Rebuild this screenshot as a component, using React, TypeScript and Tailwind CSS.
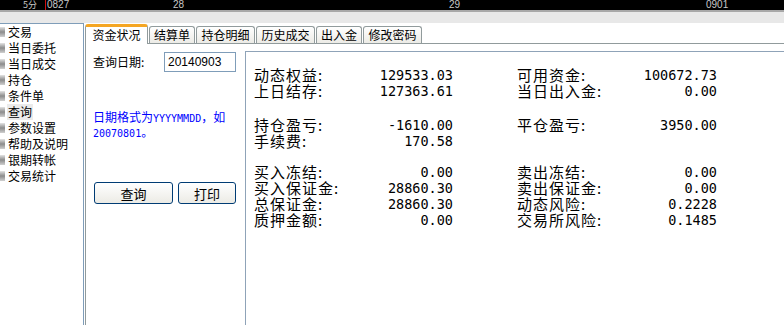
import React from 'react';

const cjk = "font-['Noto_Sans_CJK_SC',sans-serif]";
const mono = "font-['DejaVu_Sans_Mono','Noto_Sans_CJK_SC',monospace]";

const menu = ['交易', '当日委托', '当日成交', '持仓', '条件单', '查询', '参数设置', '帮助及说明', '银期转帐', '交易统计'];

const tabs = [
  { label: '资金状况', active: true },
  { label: '结算单' },
  { label: '持仓明细' },
  { label: '历史成交' },
  { label: '出入金' },
  { label: '修改密码' },
];

type Row = [string, string, string?, string?];

const groups: { rows: Row[]; mt: string }[] = [
  {
    mt: 'mt-0',
    rows: [
      ['动态权益:', '129533.03', '可用资金:', '100672.73'],
      ['上日结存:', '127363.61', '当日出入金:', '0.00'],
    ],
  },
  {
    mt: 'mt-[18px]',
    rows: [
      ['持仓盈亏:', '-1610.00', '平仓盈亏:', '3950.00'],
      ['手续费:', '170.58'],
    ],
  },
  {
    mt: 'mt-[15px]',
    rows: [
      ['买入冻结:', '0.00', '卖出冻结:', '0.00'],
      ['买入保证金:', '28860.30', '卖出保证金:', '0.00'],
      ['总保证金:', '28860.30', '动态风险:', '0.2228'],
      ['质押金额:', '0.00', '交易所风险:', '0.1485'],
    ],
  },
];

const App: React.FC = () => {
  return (
    <div className={`w-[784px] h-[325px] overflow-hidden bg-white ${cjk}`}>
      {/* chart time axis */}
      <div className="relative h-[10px] bg-black text-[9px] leading-[10px] text-[#c8c8c8]">
        <span className="absolute left-[23px] top-0 text-[9px] leading-[10px]">5分</span>
        <span className="absolute left-[45px] top-0 h-full w-px bg-[#d01010]" />
        <span className="absolute left-[47px] top-0 font-['Liberation_Sans',sans-serif] text-[10px]">0827</span>
        <span className="absolute left-[173px] top-0 font-['Liberation_Sans',sans-serif] text-[10px]">28</span>
        <span className="absolute left-[449px] top-0 font-['Liberation_Sans',sans-serif] text-[10px]">29</span>
        <span className="absolute left-[706px] top-0 font-['Liberation_Sans',sans-serif] text-[10px]">0901</span>
      </div>
      <div className="h-[2px] bg-[#a8a8a8]" />
      <div className="h-[11px] bg-[#e8e8e8]" />

      <div className="flex h-[302px]">
        {/* left menu */}
        <div className="w-[84px] shrink-0 border-t border-r border-[#7f9db9] text-[12px] leading-[16px] text-black">
          {menu.map((m) => (
            <div key={m} className="flex h-[16px] items-center">
              <div className="h-[10px] w-[5px] bg-gradient-to-b from-[#e4e4e4] via-[#8c8c8c] to-[#d0d0d0]" />
              <span className={`ml-[2px] px-[1px] whitespace-nowrap ${m === '查询' ? 'bg-[#ebebeb]' : ''}`}>{m}</span>
            </div>
          ))}
        </div>

        <div className="ml-px flex min-w-0 flex-1 flex-col">
          {/* tabs */}
          <div className="flex h-[20px] items-end text-[12px] text-black">
            {tabs.map((t) =>
              t.active ? (
                <div
                  key={t.label}
                  className="relative z-10 -mb-px flex h-[20px] w-[63px] items-center justify-center rounded-t-[3px] border-x border-t-[3px] border-x-[#919b9c] border-t-[#f5a623] bg-white pb-[1px]"
                >
                  {t.label}
                </div>
              ) : (
                <div
                  key={t.label}
                  className={`ml-px flex h-[17px] items-center justify-center rounded-t-[3px] border-x border-t border-[#919b9c] bg-gradient-to-b from-white to-[#ecebe6] ${
                    t.label.length === 3 ? 'w-[46px]' : 'w-[59px]'
                  }`}
                >
                  {t.label}
                </div>
              )
            )}
          </div>

          <div className="flex flex-1 border-t border-l border-[#919b9c]">
            {/* query form */}
            <div className="w-[159px] shrink-0 pl-[7px] pt-[8px] text-[12px] text-black">
              <div className="flex items-center">
                <span className="w-[71px]">查询日期:</span>
                <div className="flex h-[20px] w-[72px] items-center border border-[#7f9db9] pl-[3px] font-['Liberation_Sans',sans-serif] text-[12px]">
                  20140903
                </div>
              </div>
              <p className="mt-[38px] text-[12px] leading-[13px] text-[#0000ff]">
                日期格式为<span className={`${mono} text-[10px]`}>YYYYMMDD</span>，如
                <br />
                <span className={`${mono} text-[10px]`}>20070801</span>。
              </p>
              <div className="mt-[42px] flex gap-[5px] pl-px">
                <button className="h-[22px] w-[79px] rounded-[3px] border border-[#003c74] bg-gradient-to-b from-white to-[#ecebe5] text-[13px] leading-none">
                  查询
                </button>
                <button className="h-[22px] w-[58px] rounded-[3px] border border-[#003c74] bg-gradient-to-b from-white to-[#ecebe5] text-[13px] leading-none">
                  打印
                </button>
              </div>
            </div>

            {/* account figures */}
            <div className="mt-[7px] flex-1 border-t border-l border-[#8fa3b8] pl-[8px] pt-[15px] text-[15px] leading-[16px] tracking-[1px] text-black">
              {groups.map((g, gi) => (
                <div key={gi} className={g.mt}>
                  {g.rows.map((r) => (
                    <div key={r[0]} className="flex h-[16px] items-center whitespace-nowrap">
                      <span className="w-[120px]">{r[0]}</span>
                      <span className={`w-[79px] text-right tracking-[0px] ${mono} text-[13.5px]`}>{r[1]}</span>
                      <span className="w-[64px]" />
                      <span className="w-[120px]">{r[2] ?? ''}</span>
                      <span className={`w-[80px] text-right tracking-[0px] ${mono} text-[13.5px]`}>{r[3] ?? ''}</span>
                    </div>
                  ))}
                </div>
              ))}
            </div>
          </div>
        </div>
      </div>
    </div>
  );
};

export default App;
